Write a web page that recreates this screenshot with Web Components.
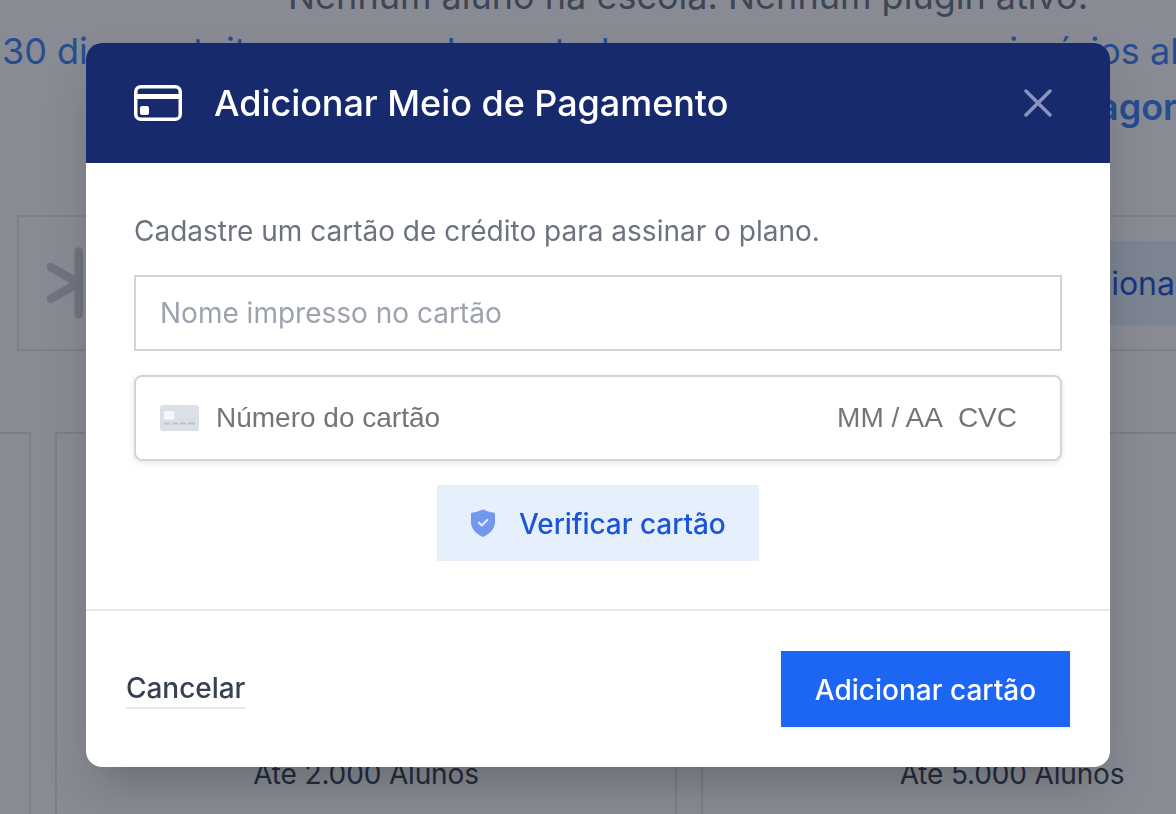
<!DOCTYPE html>
<html lang="pt-BR"><head><meta charset="utf-8"><title>Adicionar Meio de Pagamento</title>
<style>
html,body{margin:0;height:814px;overflow:hidden;background:#fff;font-family:Inter,"Liberation Sans",sans-serif}
</style></head><body>
<backdrop-page></backdrop-page>
<modal-overlay>
  <payment-modal title-text="Adicionar Meio de Pagamento"></payment-modal>
</modal-overlay>
<script>
function def(name, html){
  customElements.define(name, class extends HTMLElement{
    constructor(){super();this.attachShadow({mode:'open'}).innerHTML=typeof html==='function'?html(this):html;}
  });
}
def('plan-card',`<style>:host{display:flex;justify-content:center;box-sizing:border-box;width:622px;height:600px;flex:none;border:2px solid #e5e7eb;border-bottom:0;padding-top:323px;font-size:28px;line-height:34px;color:#374151;letter-spacing:-.15px}</style><slot></slot>`);
def('backdrop-page',`<style>
:host{display:block;width:1176px;height:814px;overflow:hidden}
.t1{white-space:nowrap;font-size:36px;line-height:48px;color:#6b7280;margin:-28px 0 0 288px}
.t2{white-space:nowrap;font-size:36px;line-height:48px;color:#3b82f6;margin:7px 0 0 2px}
.t3{white-space:nowrap;font-size:36px;line-height:48px;color:#3b82f6;font-weight:600;margin:8px 0 0 1098px}
.row{display:flex;align-items:center;box-sizing:border-box;width:1300px;height:136px;margin:84px 0 0 17px;border:2px solid #e5e7eb;padding-left:28px}
.row svg{flex:none}
.act{flex:none;box-sizing:border-box;width:240px;height:84px;margin-left:auto;margin-right:56px;background:#e6f0fd;color:#1c54d9;font-size:32px;display:flex;align-items:center;justify-content:flex-end;white-space:nowrap;padding-right:72px}
.cards{display:flex;gap:24px;margin:81px 0 0 -591px}
</style>
<div class="t1">Nenhum aluno na escola. Nenhum plugin ativo.</div>
<div class="t2">30 dias gratuitos para conhecer todos os recursos e nos princípios além dos planos</div>
<div class="t3">agora</div>
<div class="row">
  <svg width="74" height="76" viewBox="0 0 74 76" fill="none" stroke="#cdd1d8" stroke-width="8.500" stroke-linecap="round"><path d="M31.700 6.500v63M3.500 22l28 16M3.500 54l28-16"/></svg>
  <div class="act">Adicionar</div>
</div>
<div class="cards"><plan-card></plan-card><plan-card>Até 2.000 Alunos</plan-card><plan-card>Até 5.000 Alunos</plan-card></div>`);
def('modal-overlay',`<style>:host{position:fixed;inset:0;background:rgba(17,24,39,.5);display:block}</style><slot></slot>`);
def('text-field',`<style>:host{display:flex;align-items:center;box-sizing:border-box;height:76px;border:2px solid #d1d5db;padding:0 24px;font-size:28px;color:#9ca3af;background:#fff}</style><slot></slot>`);
def('stripe-field',`<style>
:host{display:flex;align-items:center;box-sizing:border-box;height:86px;border:2px solid #d1d5db;border-radius:8px;padding:0 43px 0 24px;font:28px "Liberation Sans",Arial,sans-serif;color:#757575;background:#fff;box-shadow:0 2px 6px rgba(17,24,39,.1)}
svg{flex:none;margin-right:17px}
.num{flex:1}.exp{margin-right:15px}
</style>
<svg width="39" height="26" viewBox="0 0 39 26"><rect width="39" height="26" rx="3" fill="#dbdfe7"/><rect x="4" y="6" width="10.500" height="8.500" rx="1.500" fill="#f6f7f9"/><path d="M4 18.500h6M12 18.500h6M20 18.500h6M28 18.500h7" stroke="#bcc2ce" stroke-width="2"/></svg>
<span class="num">Número do cartão</span><span class="exp">MM / AA</span><span>CVC</span>`);
def('verify-button',`<style>
:host{display:inline-flex;align-items:center;box-sizing:border-box;height:76px;width:322px;padding-left:34px;gap:24px;background:#e6f0fd;color:#1c54d9;font-size:28px;font-weight:500}
svg{flex:none}
span{padding-top:1px;letter-spacing:-.05px}
</style>
<svg width="24" height="28" viewBox="0 0 24 28"><path d="M12 .5C15.500 2 19 3.200 22.500 3.600 23.400 3.700 24 4.400 24 5.300V13c0 6.500-4.800 11.800-12 15C4.800 24.800 0 19.500 0 13V5.300C0 4.400.6 3.700 1.500 3.600 5 3.200 8.500 2 12 .5z" fill="#7396ee"/><path d="M7.800 13.500l3 3 5.600-5.600" fill="none" stroke="#e6f0fd" stroke-width="2" stroke-linecap="round" stroke-linejoin="round"/></svg><span><slot></slot></span>`);
def('primary-button',`<style>:host{display:inline-flex;align-items:center;justify-content:center;box-sizing:border-box;height:76px;width:289px;padding-top:1px;background:#1d66f4;color:#fff;font-size:28px;font-weight:500;box-shadow:0 1px 3px rgba(17,24,39,.08)}</style><slot></slot>`);
def('link-button',`<style>:host{display:inline-block;font-size:28px;font-weight:500;line-height:38px;color:#374151;border-bottom:2px solid #e5e7eb;letter-spacing:-.05px}</style><slot></slot>`);
def('payment-modal',el=>`<style>
:host{position:absolute;left:86px;top:43px;width:1024px;height:724px;display:flex;flex-direction:column;background:#fff;border-radius:16px;overflow:hidden}
header{flex:none;height:120px;background:#172a6e;display:flex;align-items:center;padding:0 58px 0 48px;color:#fff}
h2{margin:0 0 0 33px;flex:1;font-size:36px;font-weight:500;letter-spacing:-.05px;position:relative;left:-1px}
main{flex:none;box-sizing:border-box;height:446px;padding:48px 48px 0;display:flex;flex-direction:column;gap:24px}
p{margin:0;font-size:28px;line-height:40px;color:#6b7280}
.c{display:flex;justify-content:center}
footer{flex:1;border-top:2px solid #e5e7eb;display:flex;align-items:center;justify-content:space-between;padding:0 40px}
</style>
<header>
<svg width="48" height="36" viewBox="0 0 48 36" fill="none"><rect x="1.750" y="1.750" width="44.500" height="32.500" rx="5" stroke="#fff" stroke-width="3.500"/><rect x="2" y="9" width="44" height="5" fill="#fff"/><rect x="6" y="21" width="9" height="9" rx="2" fill="#fff"/></svg>
<h2>Adicionar Meio de Pagamento</h2>
<svg width="28" height="28" viewBox="0 0 28 28" fill="none" stroke="#8b94c0" stroke-width="3.500" stroke-linecap="round"><path d="M2 2l24 24M26 2L2 26"/></svg>
</header>
<main>
<p>Cadastre um cartão de crédito para assinar o plano.</p>
<text-field>Nome impresso no cartão</text-field>
<stripe-field></stripe-field>
<div class="c"><verify-button>Verificar cartão</verify-button></div>
</main>
<footer><link-button>Cancelar</link-button><primary-button>Adicionar cartão</primary-button></footer>`);
document.querySelector('modal-overlay').firstElementChild.style.boxShadow='0 25px 50px -12px rgba(0,0,0,.25)';
</script>
</body></html>
